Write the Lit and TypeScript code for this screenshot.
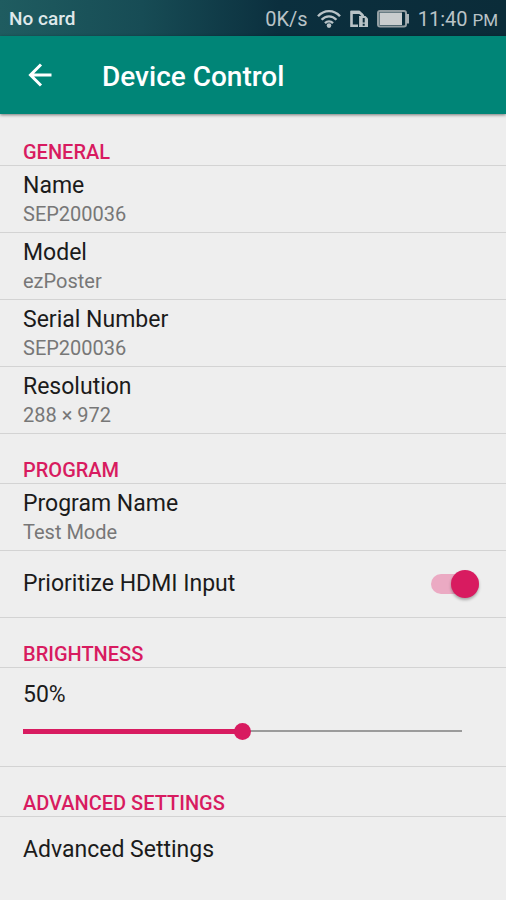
import { LitElement, html, css, nothing } from "lit";
import { customElement, property, state } from "lit/decorators.js";

@customElement("status-bar")
class StatusBar extends LitElement {
  static styles = css`
    :host {
      display: flex;
      align-items: center;
      gap: 9px;
      height: 36px;
      padding: 2px 8px 0 9px;
      box-sizing: border-box;
      background: linear-gradient(90deg, #1f5c60 0%, #174c55 28%, #0b2f3e 55%, #0b2c39 100%);
      color: #b9c3c7;
      font-size: 20px;
      line-height: 24px;
      white-space: nowrap;
    }
    .carrier {
      flex: 1;
      color: #dfe8ea;
      font-size: 19px;
      font-weight: 500;
    }
    .meridiem {
      font-size: 17px;
    }
    svg {
      display: block;
      flex: none;
    }
  `;

  render() {
    return html`
      <span class="carrier">No card</span>
      <span>0K/s</span>
      <svg width="24" height="20" viewBox="0 0 24 20" fill="none" stroke="#b9c3c7" stroke-width="2.4" role="img" aria-label="Wi-Fi">
        <path d="M1 7.200C7 .4 17 .4 23 7.200" />
        <path d="M4.600 10.800c4.200-4.600 10.600-4.600 14.800 0" />
        <path d="M8 14.200c2.400-2.400 5.600-2.400 8 0" />
        <circle cx="12" cy="16.600" r="2.300" fill="#b9c3c7" stroke="none" />
      </svg>
      <svg width="18" height="20" viewBox="0 0 18 20" role="img" aria-label="SIM missing">
        <path d="M8 16.800H1.500V3H9l3.800 3.500V8" fill="none" stroke="#b9c3c7" stroke-width="2.600" />
        <path d="M1 1.700h8.500L13 5H1z" fill="#b9c3c7" />
        <path d="M9 7h6.500L18 9.500V18H9z" fill="#b9c3c7" />
        <path d="M13.700 9v4.500M13.700 14.800v2" stroke="#0b2c39" stroke-width="2" />
        <path d="M8.600 8v9" stroke="#0b2c39" stroke-width="1" />
      </svg>
      <svg width="32" height="20" viewBox="0 0 32 20" role="img" aria-label="Battery">
        <rect x="1" y="2" width="28" height="15.500" rx="2" fill="none" stroke="#949fa3" stroke-width="2" />
        <rect x="2.500" y="3.500" width="22.500" height="12.500" fill="#c9cdce" />
        <path d="M29 5h3v9.500h-3z" fill="#a9b3b7" />
      </svg>
      <span>11:40 <span class="meridiem">PM</span></span>
    `;
  }
}

@customElement("setting-row")
class SettingRow extends LitElement {
  static styles = css`
    :host {
      display: flex;
      flex-direction: column;
      justify-content: center;
      min-height: 67px;
      padding: 6px 24px 4px 23px;
      box-sizing: border-box;
      border-bottom: 1px solid #d3d3d3;
    }
    .title {
      font-size: 23px;
      line-height: 28px;
      color: #1b1b1b;
    }
    .value {
      font-size: 20px;
      line-height: 28px;
      color: #777;
    }
  `;

  @property() heading = "";
  @property() value = "";

  render() {
    return html`
      <div class="title">${this.heading}</div>
      ${this.value ? html`<div class="value">${this.value}</div>` : nothing}
    `;
  }
}

@customElement("app-root")
class AppRoot extends LitElement {
  static styles = css`
    :host {
      display: block;
      min-height: 100vh;
      background: #eee;
      font-family: Roboto, "Liberation Sans", sans-serif;
      color: #1b1b1b;
    }
    .appbar {
      display: flex;
      align-items: center;
      gap: 38px;
      height: 78px;
      padding: 0 16px;
      box-sizing: border-box;
      background: #008577;
      box-shadow: 0 1px 3px rgba(0, 0, 0, 0.5);
    }
    .back {
      display: grid;
      place-items: center;
      width: 48px;
      height: 48px;
      padding: 0;
      border: 0;
      background: none;
    }
    h1 {
      margin: 0;
      padding-top: 4px;
      color: #fff;
      font-size: 28px;
      font-weight: 500;
      line-height: 32px;
    }
    main {
      padding-top: 2px;
    }
    h2 {
      display: flex;
      align-items: flex-end;
      height: 50px;
      margin: 0;
      padding: 0 23px 1px;
      box-sizing: border-box;
      border-bottom: 1px solid #d3d3d3;
      color: #d81b60;
      font-size: 20px;
      font-weight: 500;
      line-height: 24px;
    }
    .row {
      display: flex;
      align-items: center;
      justify-content: space-between;
      min-height: 67px;
      padding: 0 27px 0 23px;
      box-sizing: border-box;
      border-bottom: 1px solid #d3d3d3;
      font-size: 23px;
      line-height: 28px;
    }
    .switch {
      appearance: none;
      display: flex;
      align-items: center;
      justify-content: flex-start;
      width: 48px;
      height: 20px;
      margin: 0;
      border-radius: 10px;
      background: #b9b9b9;
    }
    .switch:checked {
      justify-content: flex-end;
      background: #ebaac3;
    }
    .switch::before {
      content: "";
      width: 28px;
      height: 28px;
      flex: none;
      border-radius: 50%;
      background: #fafafa;
      box-shadow: 0 2px 3px rgba(0, 0, 0, 0.3);
    }
    .switch:checked::before {
      background: #d81b60;
    }
    .brightness {
      padding: 13px 44px 26px 23px;
      border-bottom: 1px solid #d3d3d3;
      font-size: 23px;
      line-height: 28px;
    }
    .brightness label {
      display: block;
    }
    .slider {
      appearance: none;
      display: block;
      width: 100%;
      height: 18px;
      margin: 13px 0 0;
      background:
        linear-gradient(#d81b60, #d81b60) left center / var(--fill) 5px no-repeat,
        linear-gradient(#9b9b9b, #9b9b9b) center / 100% 2px no-repeat;
    }
    .slider::-webkit-slider-thumb {
      appearance: none;
      width: 17px;
      height: 17px;
      border-radius: 50%;
      background: #d81b60;
    }
    .link {
      display: flex;
      align-items: center;
      min-height: 65px;
      padding: 0 23px;
      color: inherit;
      font-size: 23px;
      line-height: 28px;
      text-decoration: none;
    }
  `;

  @state() private brightness = 50;
  @state() private hdmi = true;

  render() {
    return html`
      <status-bar></status-bar>
      <header class="appbar">
        <button class="back" aria-label="Back">
          <svg width="24" height="24" viewBox="0 0 24 24" fill="none" stroke="#fff" stroke-width="3">
            <path d="M23.500 12H3M13 1.500 2.500 12 13 22.500" />
          </svg>
        </button>
        <h1>Device Control</h1>
      </header>
      <main>
        <h2>GENERAL</h2>
        <setting-row heading="Name" value="SEP200036"></setting-row>
        <setting-row heading="Model" value="ezPoster"></setting-row>
        <setting-row heading="Serial Number" value="SEP200036"></setting-row>
        <setting-row heading="Resolution" value="288 × 972"></setting-row>
        <h2>PROGRAM</h2>
        <setting-row heading="Program Name" value="Test Mode"></setting-row>
        <div class="row">
          <label for="hdmi">Prioritize HDMI Input</label>
          <input
            id="hdmi"
            class="switch"
            type="checkbox"
            role="switch"
            .checked=${this.hdmi}
            @change=${(e: Event) => (this.hdmi = (e.target as HTMLInputElement).checked)}
          />
        </div>
        <h2>BRIGHTNESS</h2>
        <div class="brightness">
          <label for="level">${this.brightness}%</label>
          <input
            id="level"
            class="slider"
            type="range"
            min="0"
            max="100"
            style="--fill: ${this.brightness}%"
            .value=${String(this.brightness)}
            @input=${(e: Event) => (this.brightness = Number((e.target as HTMLInputElement).value))}
          />
        </div>
        <h2>ADVANCED SETTINGS</h2>
        <a class="link" href="#advanced">Advanced Settings</a>
      </main>
    `;
  }
}
